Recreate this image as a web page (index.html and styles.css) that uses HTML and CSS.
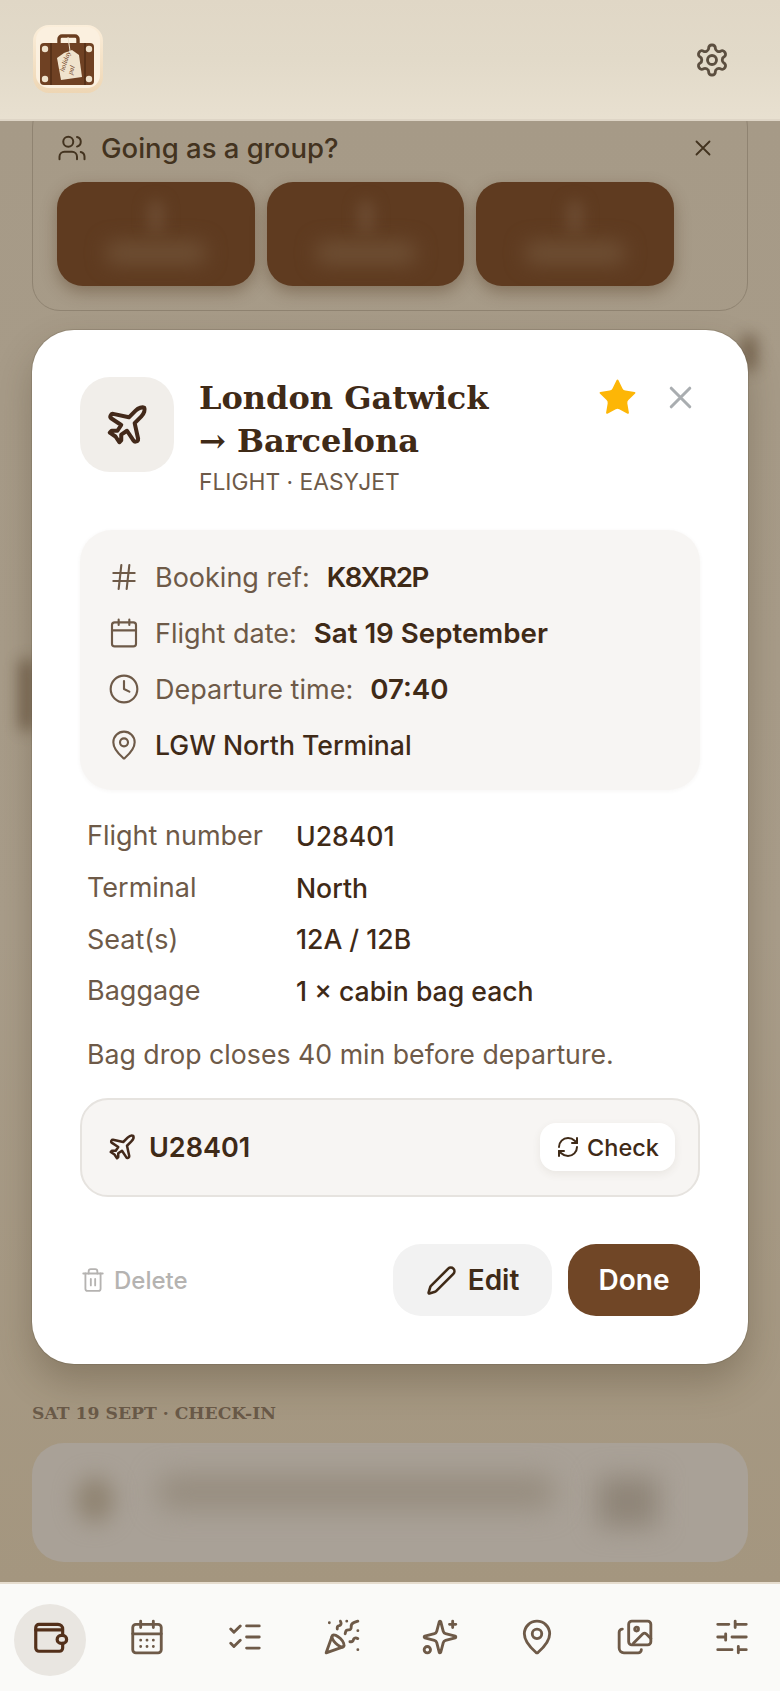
FILE: index.html
```html
<!DOCTYPE html>
<html lang="en">
<head>
  <meta charset="UTF-8">
  <meta name="viewport" content="width=device-width, initial-scale=1.0">
  <title>Holiday Wallet</title>
  <link rel="stylesheet" href="styles.css">
</head>
<body>
  <div class="app">

    <!-- Top bar -->
    <header class="topbar">
      <svg class="logo" viewBox="0 0 70 70">
        <defs>
          <linearGradient id="logoBg" x1="0" y1="0" x2="0" y2="1">
            <stop offset="0" stop-color="#fbeeda"/>
            <stop offset="1" stop-color="#eed6b4"/>
          </linearGradient>
        </defs>
        <rect x="0" y="0" width="70" height="68" rx="16" fill="url(#logoBg)"/>
        <rect x="3" y="2" width="64" height="61" rx="13" fill="#fbf0df"/>
        <path d="M26 19v-5a3 3 0 0 1 3-3h13a3 3 0 0 1 3 3v5" fill="none" stroke="#6a3d1f" stroke-width="3.4"/>
        <rect x="7" y="18" width="54" height="42" rx="4" fill="#6f4123"/>
        <path d="M18 18v42M52 18v42" stroke="#4e2b14" stroke-width="1.4"/>
        <circle cx="12" cy="24" r="3.2" fill="#efe2cc"/>
        <circle cx="56" cy="24" r="3.2" fill="#efe2cc"/>
        <circle cx="12" cy="54" r="3.2" fill="#efe2cc"/>
        <circle cx="56" cy="54" r="3.2" fill="#efe2cc"/>
        <path d="M35 12 37 26" stroke="#efe2cc" stroke-width="1"/>
        <path d="M31 28 39 25 46 30 49 52 28 55 24 33Z" fill="#f0e3cd"/>
        <text class="logo-tag" transform="translate(31 47) rotate(-72)">holiday</text>
        <text class="logo-tag" transform="translate(39 50) rotate(-72)">pal</text>
      </svg>
      <svg class="icon icon-gear" viewBox="0 0 24 24">
        <path d="M12.22 2h-.44a2 2 0 0 0-2 2v.18a2 2 0 0 1-1 1.73l-.43.25a2 2 0 0 1-2 0l-.15-.08a2 2 0 0 0-2.73.73l-.22.38a2 2 0 0 0 .73 2.73l.15.1a2 2 0 0 1 1 1.72v.51a2 2 0 0 1-1 1.74l-.15.09a2 2 0 0 0-.73 2.73l.22.38a2 2 0 0 0 2.73.73l.15-.08a2 2 0 0 1 2 0l.43.25a2 2 0 0 1 1 1.73V20a2 2 0 0 0 2 2h.44a2 2 0 0 0 2-2v-.18a2 2 0 0 1 1-1.73l.43-.25a2 2 0 0 1 2 0l.15.08a2 2 0 0 0 2.73-.73l.22-.39a2 2 0 0 0-.73-2.73l-.15-.08a2 2 0 0 1-1-1.74v-.5a2 2 0 0 1 1-1.74l.15-.09a2 2 0 0 0 .73-2.73l-.22-.38a2 2 0 0 0-2.73-.73l-.15.08a2 2 0 0 1-2 0l-.43-.25a2 2 0 0 1-1-1.73V4a2 2 0 0 0-2-2z"/>
        <circle cx="12" cy="12" r="3"/>
      </svg>
    </header>

    <!-- Dimmed page behind the modal -->
    <main class="backdrop">
      <section class="group-card">
        <div class="group-head">
          <svg class="icon icon-users" viewBox="0 0 24 24">
            <path d="M16 21v-2a4 4 0 0 0-4-4H6a4 4 0 0 0-4 4v2"/>
            <circle cx="9" cy="7" r="4"/>
            <path d="M22 21v-2a4 4 0 0 0-3-3.87"/>
            <path d="M16 3.13a4 4 0 0 1 0 7.75"/>
          </svg>
          <span class="group-title">Going as a group?</span>
          <svg class="icon icon-group-close" viewBox="0 0 24 24"><path d="M18 6 6 18M6 6l12 12"/></svg>
        </div>
        <div class="group-options">
          <div class="group-option"><i class="smudge-top"></i><i class="smudge-text"></i></div>
          <div class="group-option"><i class="smudge-top"></i><i class="smudge-text"></i></div>
          <div class="group-option"><i class="smudge-top"></i><i class="smudge-text"></i></div>
        </div>
      </section>

      <section class="day-section">
        <h3 class="day-label">SAT 19 SEPT · CHECK-IN</h3>
        <div class="day-card">
          <i class="smudge-dot"></i>
          <i class="smudge-line"></i>
          <i class="smudge-side"></i>
        </div>
      </section>
    </main>

    <!-- Booking modal -->
    <div class="smudge-edge smudge-left"></div>
    <div class="smudge-edge smudge-right"></div>
    <div class="modal">
      <div class="modal-head">
        <div class="type-badge">
          <svg class="icon icon-plane-lg" viewBox="0 0 24 24">
            <path d="M17.8 19.2 16 11l3.5-3.5C21 6 21.5 4 21 3c-1-.5-3 0-4.5 1.5L13 8 4.8 6.2c-.5-.1-.9.1-1.1.5l-.3.5c-.2.5-.1 1 .3 1.3L9 12l-2 3H4l-1 1 3 2 2 3 1-1v-3l3-2 3.5 5.3c.3.4.8.5 1.3.3l.5-.2c.4-.3.6-.7.5-1.2z"/>
          </svg>
        </div>
        <div class="head-text">
          <h2 class="modal-title">London Gatwick<br>→ Barcelona</h2>
          <p class="modal-sub">FLIGHT · EASYJET</p>
        </div>
        <div class="head-actions">
          <svg class="icon-star" viewBox="0 0 24 24">
            <path d="M11.525 2.295a.53.53 0 0 1 .95 0l2.31 4.679a2.123 2.123 0 0 0 1.595 1.16l5.166.756a.53.53 0 0 1 .294.904l-3.736 3.638a2.123 2.123 0 0 0-.611 1.878l.882 5.14a.53.53 0 0 1-.771.56l-4.618-2.428a2.122 2.122 0 0 0-1.973 0L6.396 21.01a.53.53 0 0 1-.77-.56l.881-5.139a2.122 2.122 0 0 0-.611-1.879L2.16 9.795a.53.53 0 0 1 .294-.906l5.165-.755a2.122 2.122 0 0 0 1.597-1.16z"/>
          </svg>
          <svg class="icon icon-close" viewBox="0 0 24 24"><path d="M18 6 6 18M6 6l12 12"/></svg>
        </div>
      </div>

      <div class="info-box">
        <div class="info-row">
          <svg class="icon icon-info" viewBox="0 0 24 24"><path d="M4 9h16M4 15h16M10 3 8 21M16 3l-2 18"/></svg>
          <span class="info-label">Booking ref:</span>
          <strong class="info-value info-ref">K8XR2P</strong>
        </div>
        <div class="info-row">
          <svg class="icon icon-info" viewBox="0 0 24 24"><path d="M8 2v4M16 2v4"/><rect x="3" y="4" width="18" height="18" rx="2"/><path d="M3 10h18"/></svg>
          <span class="info-label">Flight date:</span>
          <strong class="info-value">Sat 19 September</strong>
        </div>
        <div class="info-row">
          <svg class="icon icon-info" viewBox="0 0 24 24"><circle cx="12" cy="12" r="10"/><path d="M12 6v6l4 2"/></svg>
          <span class="info-label">Departure time:</span>
          <strong class="info-value">07:40</strong>
        </div>
        <div class="info-row">
          <svg class="icon icon-info" viewBox="0 0 24 24"><path d="M20 10c0 4.993-5.539 10.193-7.399 11.799a1 1 0 0 1-1.202 0C9.539 20.193 4 14.993 4 10a8 8 0 0 1 16 0"/><circle cx="12" cy="10" r="3"/></svg>
          <span class="info-place">LGW North Terminal</span>
        </div>
      </div>

      <dl class="details">
        <div class="detail-row"><dt>Flight number</dt><dd>U28401</dd></div>
        <div class="detail-row"><dt>Terminal</dt><dd>North</dd></div>
        <div class="detail-row"><dt>Seat(s)</dt><dd>12A / 12B</dd></div>
        <div class="detail-row"><dt>Baggage</dt><dd>1 × cabin bag each</dd></div>
      </dl>

      <p class="note">Bag drop closes 40 min before departure.</p>

      <div class="status-box">
        <svg class="icon icon-plane-sm" viewBox="0 0 24 24">
          <path d="M17.8 19.2 16 11l3.5-3.5C21 6 21.5 4 21 3c-1-.5-3 0-4.5 1.5L13 8 4.8 6.2c-.5-.1-.9.1-1.1.5l-.3.5c-.2.5-.1 1 .3 1.3L9 12l-2 3H4l-1 1 3 2 2 3 1-1v-3l3-2 3.5 5.3c.3.4.8.5 1.3.3l.5-.2c.4-.3.6-.7.5-1.2z"/>
        </svg>
        <span class="status-flight">U28401</span>
        <button class="check-btn">
          <svg class="icon icon-refresh" viewBox="0 0 24 24">
            <path d="M3 12a9 9 0 0 1 9-9 9.75 9.75 0 0 1 6.74 2.74L21 8"/><path d="M21 3v5h-5"/>
            <path d="M21 12a9 9 0 0 1-9 9 9.75 9.75 0 0 1-6.74-2.74L3 16"/><path d="M8 16H3v5"/>
          </svg>
          Check
        </button>
      </div>

      <div class="modal-foot">
        <button class="delete-btn">
          <svg class="icon icon-trash" viewBox="0 0 24 24">
            <path d="M3 6h18"/><path d="M19 6v14c0 1-1 2-2 2H7c-1 0-2-1-2-2V6"/>
            <path d="M8 6V4c0-1 1-2 2-2h4c1 0 2 1 2 2v2"/><path d="M10 11v6M14 11v6"/>
          </svg>
          Delete
        </button>
        <button class="edit-btn">
          <svg class="icon icon-pencil" viewBox="0 0 24 24">
            <path d="M21.174 6.812a1 1 0 0 0-3.986-3.987L3.842 16.174a2 2 0 0 0-.5.83l-1.321 4.352a.5.5 0 0 0 .623.622l4.353-1.32a2 2 0 0 0 .83-.497z"/>
          </svg>
          Edit
        </button>
        <button class="done-btn">Done</button>
      </div>
    </div>

    <!-- Bottom tabs -->
    <nav class="tabbar">
      <div class="tab tab-active">
        <svg class="icon" viewBox="0 0 24 24">
          <path d="M20 11V7a3 3 0 0 0-3-3H5a2 2 0 0 0-2 2v13a2 2 0 0 0 2 2h13a2 2 0 0 0 2-2v-3"/>
          <path d="M3 7.5h16"/>
          <rect x="16.5" y="11" width="6" height="5" rx="2.5"/>
        </svg>
      </div>
      <div class="tab">
        <svg class="icon" viewBox="0 0 24 24">
          <path d="M8 2v4M16 2v4"/><rect x="3" y="4" width="18" height="18" rx="2"/><path d="M3 10h18"/>
          <path d="M8 14h.01M12 14h.01M16 14h.01M8 18h.01M12 18h.01M16 18h.01"/>
        </svg>
      </div>
      <div class="tab">
        <svg class="icon" viewBox="0 0 24 24"><path d="m3 7 2 2 4-4M3 16l2 2 4-4M13 5h8M13 12h8M13 19h8"/></svg>
      </div>
      <div class="tab">
        <svg class="icon" viewBox="0 0 24 24">
          <path d="M5.8 11.3 2 22l10.7-3.79"/><path d="M4 3h.01M22 8h.01M15 2h.01M22 20h.01"/>
          <path d="m22 2-2.24.75a2.9 2.9 0 0 0-1.96 3.12c.1.86-.57 1.63-1.45 1.63h-.38c-.86 0-1.6.6-1.76 1.44L14 10"/>
          <path d="m22 13-.82-.33c-.86-.34-1.82.2-1.98 1.11c-.11.7-.72 1.22-1.43 1.22H17"/>
          <path d="m11 2 .33.82c.34.86-.2 1.82-1.11 1.98C9.52 4.9 9 5.52 9 6.23V7"/>
          <path d="M11 13c1.93 1.93 2.83 4.17 2 5-.83.83-3.07-.07-5-2-1.93-1.93-2.83-4.17-2-5 .83-.83 3.07.07 5 2Z"/>
        </svg>
      </div>
      <div class="tab">
        <svg class="icon" viewBox="0 0 24 24">
          <path d="M9.937 15.5A2 2 0 0 0 8.5 14.063l-6.135-1.582a.5.5 0 0 1 0-.962L8.5 9.936A2 2 0 0 0 9.937 8.5l1.582-6.135a.5.5 0 0 1 .963 0L14.063 8.5A2 2 0 0 0 15.5 9.937l6.135 1.581a.5.5 0 0 1 0 .964L15.5 14.063a2 2 0 0 0-1.437 1.437l-1.582 6.135a.5.5 0 0 1-.963 0z"/>
          <path d="M20 2v4M22 4h-4"/><circle cx="4" cy="20" r="2"/>
        </svg>
      </div>
      <div class="tab">
        <svg class="icon" viewBox="0 0 24 24"><path d="M20 10c0 4.993-5.539 10.193-7.399 11.799a1 1 0 0 1-1.202 0C9.539 20.193 4 14.993 4 10a8 8 0 0 1 16 0"/><circle cx="12" cy="10" r="3"/></svg>
      </div>
      <div class="tab">
        <svg class="icon" viewBox="0 0 24 24">
          <rect x="8" y="2" width="14" height="15" rx="2"/>
          <circle cx="13" cy="7" r="1.2"/>
          <path d="m11 16 6-6a1.5 1.5 0 0 1 2 0l3 3"/>
          <path d="M4 7a2 2 0 0 0-2 2v10a3 3 0 0 0 3 3h9a2 2 0 0 0 2-2"/>
        </svg>
      </div>
      <div class="tab">
        <svg class="icon" viewBox="0 0 24 24"><path d="M21 4h-7M10 4H3M21 12h-9M8 12H3M21 20h-5M12 20H3M14 2v4M8 10v4M16 18v4"/></svg>
      </div>
    </nav>
  </div>
</body>
</html>
```

FILE: styles.css
```css
/* Reset and base styles */
* { margin: 0; padding: 0; box-sizing: border-box; }
body, html { width: 100%; height: 100%; font-family: Inter, "Liberation Sans", sans-serif; background: #a69a87; overflow: hidden; }
button { font-family: inherit; border: none; background: none; }
i { display: block; }

.app { position: relative; width: 780px; height: 1691px; display: flex; flex-direction: column; overflow: hidden; }

/* Shared icon look */
.icon { display: block; flex: none; fill: none; stroke: currentColor; stroke-width: 2; stroke-linecap: round; stroke-linejoin: round; }

/* Top bar */
.topbar {
  position: relative; z-index: 2; flex: none;
  height: 121px; padding: 25px 50px 0 33px;
  display: flex; align-items: flex-start; justify-content: space-between;
  background: linear-gradient(180deg, #e0d7c6 0%, #e2dac9 50%, #e8e0d0 100%);
  border-bottom: 2px solid #ded5c6;
}
.logo { width: 70px; height: 70px; display: block; }
.logo-tag { font-family: "Liberation Serif", serif; font-style: italic; font-size: 7px; fill: #6f4123; }
.icon-gear { width: 36px; height: 36px; margin-top: 17px; color: #5c4f40; stroke-width: 1.9; }

/* Dimmed page */
.backdrop {
  flex: 1; min-height: 0;
  display: flex; flex-direction: column; justify-content: space-between;
  padding: 0 32px 20px;
  background: linear-gradient(180deg, #a69a87 0%, #a99d8a 55%, #a4967f 100%);
}
.group-card {
  height: 212px; margin-top: -22px; padding: 31px 24px 0;
  border: 1px solid #8f8371; border-radius: 28px;
}
.group-head { display: flex; align-items: center; height: 34px; color: #43331f; }
.icon-users { width: 30px; height: 30px; stroke-width: 1.6; }
.group-title { margin-left: 14px; font-size: 27.5px; font-weight: 500; }
.icon-group-close { width: 26px; height: 26px; margin-left: auto; margin-right: 7px; stroke-width: 1.7; }
.group-options { display: flex; gap: 12px; margin-top: 17px; width: 617px; }
.group-option {
  flex: 1; height: 104px; border-radius: 26px; background: #5f3b20;
  box-shadow: 0 6px 16px rgba(70, 40, 15, 0.35);
  display: flex; flex-direction: column; align-items: center; padding-top: 18px; overflow: hidden;
}
.smudge-top { width: 18px; height: 34px; border-radius: 8px; background: #6b4a30; filter: blur(7px); }
.smudge-text { width: 100px; height: 22px; margin-top: 8px; border-radius: 8px; background: #6f5035; filter: blur(10px); }

.day-label { font-family: "DejaVu Serif", serif; font-size: 17.2px; font-weight: 700; color: #6a5a48; margin-bottom: 20px; }
.day-card {
  height: 119px; padding: 28px 90px 0 44px; border-radius: 32px;
  background: #a9a197; overflow: hidden;
  display: flex; align-items: flex-start; gap: 44px;
}
.smudge-dot { flex: none; width: 38px; height: 46px; margin-top: 6px; border-radius: 50%; background: #8f8371; filter: blur(11px); }
.smudge-line { flex: 1; height: 34px; margin-top: 4px; border-radius: 12px; background: #968c7e; filter: blur(14px); }
.smudge-side { flex: none; width: 60px; height: 50px; margin-top: 6px; background: #8f8578; filter: blur(13px); }

/* Bits of the blurred page that peek out past the modal */
.smudge-edge { position: absolute; background: #5b4630; filter: blur(8px); opacity: 0.75; }
.smudge-left { left: 20px; top: 660px; width: 14px; height: 70px; }
.smudge-right { left: 742px; top: 336px; width: 14px; height: 34px; }

/* Booking modal */
.modal {
  position: absolute; z-index: 1; left: 32px; top: 330px;
  width: 716px; height: 1034px; padding: 47px 48px 48px;
  background: #fff; border-radius: 42px;
  box-shadow: 0 0 0 1px rgba(90, 80, 65, 0.22), 0 18px 36px rgba(60, 45, 25, 0.28);
  display: flex; flex-direction: column;
}
.modal-head { display: flex; align-items: flex-start; }
.type-badge { flex: none; width: 94px; height: 95px; border-radius: 30px; background: #f1eeea; display: flex; align-items: center; justify-content: center; color: #43291a; }
.icon-plane-lg { width: 46px; height: 46px; stroke-width: 2.1; }
.head-text { margin-left: 25px; }
.modal-title { font-family: "DejaVu Serif", serif; font-size: 32px; line-height: 43px; font-weight: 700; color: #3f2a17; }
.modal-sub { margin-top: 4px; font-size: 22.8px; line-height: 30px; color: #6e5a48; }
.head-actions { margin-left: auto; display: flex; align-items: center; gap: 23px; height: 42px; margin-top: -1px; }
.icon-star { display: block; width: 43px; height: 43px; fill: #fdb606; }
.icon-close { width: 37px; height: 37px; color: #a9adb0; margin-right: 1px; }

.info-box {
  margin-top: 33px; height: 260px; padding: 19px 30px 17px;
  background: #f7f5f3; border-radius: 32px;
  box-shadow: 0 1px 4px rgba(80, 60, 40, 0.05);
}
.info-row { display: flex; align-items: center; height: 56px; font-size: 27px; }
.icon-info { width: 32px; height: 32px; color: #6e5a48; stroke-width: 1.6; margin-right: 15px; margin-left: -2px; }
.info-label { color: #6e5a48; margin-right: 17px; }
.info-value { font-size: 27.7px; font-weight: 600; color: #3f2a17; }
.info-ref { letter-spacing: -1.4px; }
.info-place { font-weight: 500; color: #3f2a17; font-size: 26.6px; }

.details { margin-top: 20px; padding-left: 7px; }
.detail-row { display: flex; align-items: center; height: 51.7px; }
.detail-row dt { width: 209px; font-size: 27px; color: #6e5a48; }
.detail-row dd { font-size: 26.6px; font-weight: 500; color: #3f2a17; }

.note { margin-top: 17px; padding-left: 7px; font-size: 26.7px; line-height: 40px; color: #6e5a48; }

.status-box {
  margin-top: 24px; height: 100px; padding: 0 24px 0 25px;
  background: #f7f5f3; border: 2px solid #e6e3df; border-radius: 28px;
  display: flex; align-items: center;
}
.icon-plane-sm { width: 30px; height: 30px; color: #43291a; }
.status-flight { margin-left: 12px; font-size: 27px; font-weight: 600; color: #3f2a17; }
.check-btn {
  margin-left: auto; margin-right: -1px; width: 135px; height: 48px; border-radius: 16px;
  background: #fff; box-shadow: 0 3px 8px rgba(80, 60, 40, 0.08);
  display: flex; align-items: center; justify-content: center; gap: 7px;
  font-size: 23.5px; font-weight: 500; color: #3f2a17;
}
.icon-refresh { width: 24px; height: 24px; }

.modal-foot { margin-top: 47px; display: flex; align-items: center; }
.delete-btn { display: flex; align-items: center; gap: 8px; font-size: 24px; font-weight: 500; color: #b5b3b1; margin-left: 0; }
.icon-trash { width: 26px; height: 26px; stroke-width: 1.7; }
.edit-btn {
  margin-left: auto; width: 159px; height: 72px; border-radius: 28px; background: #f2f2f2;
  display: flex; align-items: center; justify-content: center; gap: 11px;
  font-size: 28px; font-weight: 600; color: #3f2a17;
}
.icon-pencil { width: 31px; height: 31px; }
.done-btn { margin-left: 16px; width: 132px; height: 72px; border-radius: 28px; background: #704626; font-size: 28px; font-weight: 600; color: #fff; }

/* Bottom tabs */
.tabbar {
  flex: none; height: 109px; padding: 20px 0 0 1px;
  background: #fafaf8; border-top: 2px solid #e6ddcf;
  display: grid; grid-template-columns: repeat(8, 97.5px); align-items: start;
}
.tab { display: flex; justify-content: center; color: #6e5a48; }
.tab .icon { width: 38px; height: 38px; margin-top: 14px; stroke-width: 1.8; }
.tab-active { position: relative; color: #53301a; }
.tab-active::before { content: ""; position: absolute; left: 13px; top: 0; width: 72px; height: 72px; border-radius: 50%; background: #e9e6e1; }
.tab-active .icon { position: relative; stroke-width: 2; }
```
